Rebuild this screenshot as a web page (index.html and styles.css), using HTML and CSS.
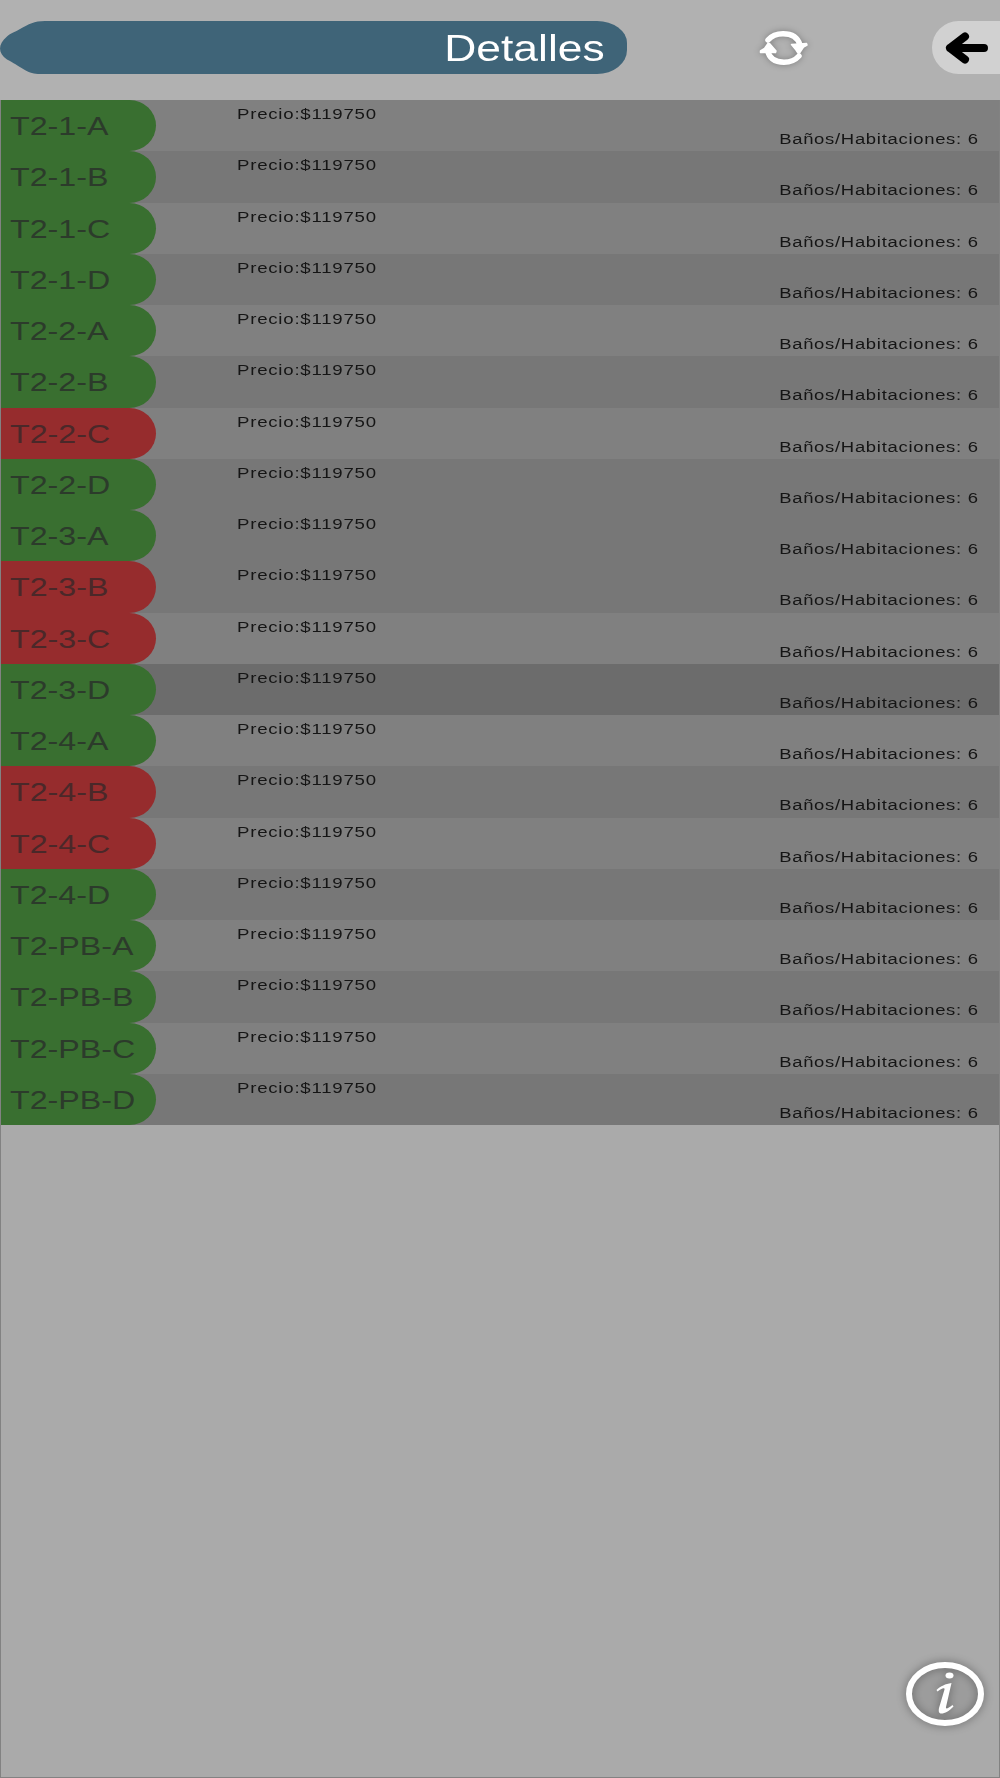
FILE: index.html
```html
<!DOCTYPE html>
<html lang="es">
<head>
<meta charset="utf-8">
<title>Detalles</title>
<link rel="stylesheet" href="styles.css">
</head>
<body>
<header class="bar">
  <div class="title">
    <svg class="tip" viewBox="0 0 48 53" width="48" height="53"><path d="M48 0H45C34 0 29 3 20 8C14 11.500 11 12 7 15.500C-2.300 23.500-2.300 31.500 7 38.500C14 42 17 44.500 24 48.500C30 52 34 53 40 53H48Z"/></svg>
    <h1 class="name"><span>Detalles</span></h1>
  </div>
  <button class="refresh" aria-label="Actualizar">
    <svg viewBox="0 0 60 48" width="60" height="48">
      <g class="arrows">
        <path d="M11 16C15 11.500 20 9.800 26 9.800C35 9.800 41 14 43 21" />
        <path d="M42 32C38 36.500 33 38.200 27 38.200C18 38.200 12 34 10.500 26" />
      </g>
      <path class="heads" d="M34.500 20.500L49.500 19.500L50 21L46.500 23L42.500 29H41L39 26ZM3.500 28.500L3.500 27L7.500 24.500L11 19.500H12.500L19 27L18.500 28.500Z"/>
    </svg>
  </button>
  <button class="back" aria-label="Volver">
    <svg viewBox="0 0 68 53" width="68" height="53"><path d="M18 27H52M33 15.500L18 27L33 38.500"/></svg>
  </button>
</header>
<main class="list" id="list"></main>
<button class="info" aria-label="Información">
  <svg viewBox="0 0 100 90" width="100" height="90">
    <ellipse cx="50" cy="45" rx="36" ry="29"/>
    <ellipse class="dot" cx="54.500" cy="26.500" rx="4" ry="3"/>
    <path d="M41.500 41C46 37 50 35 56.500 34L51 58C50.500 60.500 53 59.500 57.500 56L58.500 57.500C54 62.500 49 65 45.500 64.500C43.500 64 43.500 61.500 44 59L49.500 40.500C50 38 46 39.500 42.500 42.500Z"/>
  </svg>
</button>
<script src="list.js"></script>
</body>
</html>
```
FILE: styles.css
```css
* { box-sizing: border-box; }
body {
  margin: 0;
  width: 1000px;
  height: 1778px;
  overflow: hidden;
  background: #aaa;
  font-family: "Liberation Sans", Arial, sans-serif;
  display: flex;
  flex-direction: column;
  box-shadow: inset 1px -1px #828282, inset -1px 0 #828282;
}
button { border: 0; padding: 0; background: none; }
svg { display: block; }
.bar {
  height: 100px;
  flex: none;
  padding-top: 21px;
  background: #b1b1b1;
  display: flex;
  align-items: flex-start;
}
.title { width: 627px; height: 53px; display: flex; }
.tip { fill: #3f6478; flex: none; }
.name {
  margin: 0;
  flex: 1;
  padding: 1px 22px 0 0;
  background: #3f6478;
  border-radius: 0 30px 30px 0 / 0 22px 24px 0;
  color: #fff;
  font-size: 37px;
  font-weight: 400;
  line-height: 53px;
  text-align: right;
}
.name span { display: inline-block; transform: scaleX(1.2); transform-origin: right; }
.refresh { margin: 3px 0 0 130px; }
.refresh svg { filter: drop-shadow(0 0 3px rgba(0, 0, 0, .3)); }
.arrows { fill: none; stroke: #fff; stroke-width: 5.5; stroke-linecap: round; }
.heads { fill: #fff; stroke: #fff; stroke-width: 1.5; stroke-linejoin: round; }
.back {
  margin-left: auto;
  width: 68px;
  height: 53px;
  background: #d1d1d1;
  border-radius: 27px 0 0 27px;
}
.back path { fill: none; stroke: #000; stroke-width: 8; stroke-linecap: round; stroke-linejoin: round; }
.list { margin: 0 1px; display: flex; flex-direction: column; }
.row {
  height: 51.25px;
  display: grid;
  grid-template-columns: 155px 1fr 1fr;
  background: #808080;
}
.row.dark { background: #777; }
.row.darker { background: #6c6c6c; }
.unit {
  background: #396f30;
  border-radius: 0 27px 27px 0 / 0 26px 26px 0;
  color: #2c3b2b;
  font-size: 26.5px;
  line-height: 51px;
  padding-left: 9px;
  white-space: nowrap;
}
.sold .unit { background: #962c2d; color: #4a2829; }
.unit span { display: inline-block; transform: translateY(.7px) scaleX(1.215); transform-origin: left; }
.price { padding: 5px 0 0 81px; }
.price, .rooms { font-size: 15.5px; line-height: 18px; color: #151515; white-space: nowrap; }
.price span { display: inline-block; transform: scaleX(1.2); transform-origin: left; letter-spacing: .65px; }
.rooms { padding: 30px 21px 0 0; text-align: right; }
.rooms span { display: inline-block; transform: scaleX(1.19); transform-origin: right; letter-spacing: .6px; margin-right: -.6px; }
.info { margin: auto 5px 39px auto; }
.info svg { filter: drop-shadow(0 0 5px rgba(0, 0, 0, .4)); fill: #fff; }
.info ellipse { fill: rgba(0, 0, 0, .06); stroke: #fff; stroke-width: 6; }
.info .dot { fill: #fff; stroke: none; }
```
FILE: list.js
```js
const units = ["1-A", "1-B", "1-C", "1-D", "2-A", "2-B", "2-C", "2-D", "3-A", "3-B",
  "3-C", "3-D", "4-A", "4-B", "4-C", "4-D", "PB-A", "PB-B", "PB-C", "PB-D"];
const sold = ["2-C", "3-B", "3-C", "4-B", "4-C"];
document.getElementById("list").innerHTML = units.map((u, i) => {
  const shade = u === "3-D" ? "darker" : i % 2 || u === "3-A" ? "dark" : "";
  return `<div class="row ${shade} ${sold.includes(u) ? "sold" : ""}">
    <div class="unit"><span>T2-${u}</span></div>
    <div class="price"><span>Precio:$119750</span></div>
    <div class="rooms"><span>Baños/Habitaciones: 6</span></div>
  </div>`;
}).join("");
```
